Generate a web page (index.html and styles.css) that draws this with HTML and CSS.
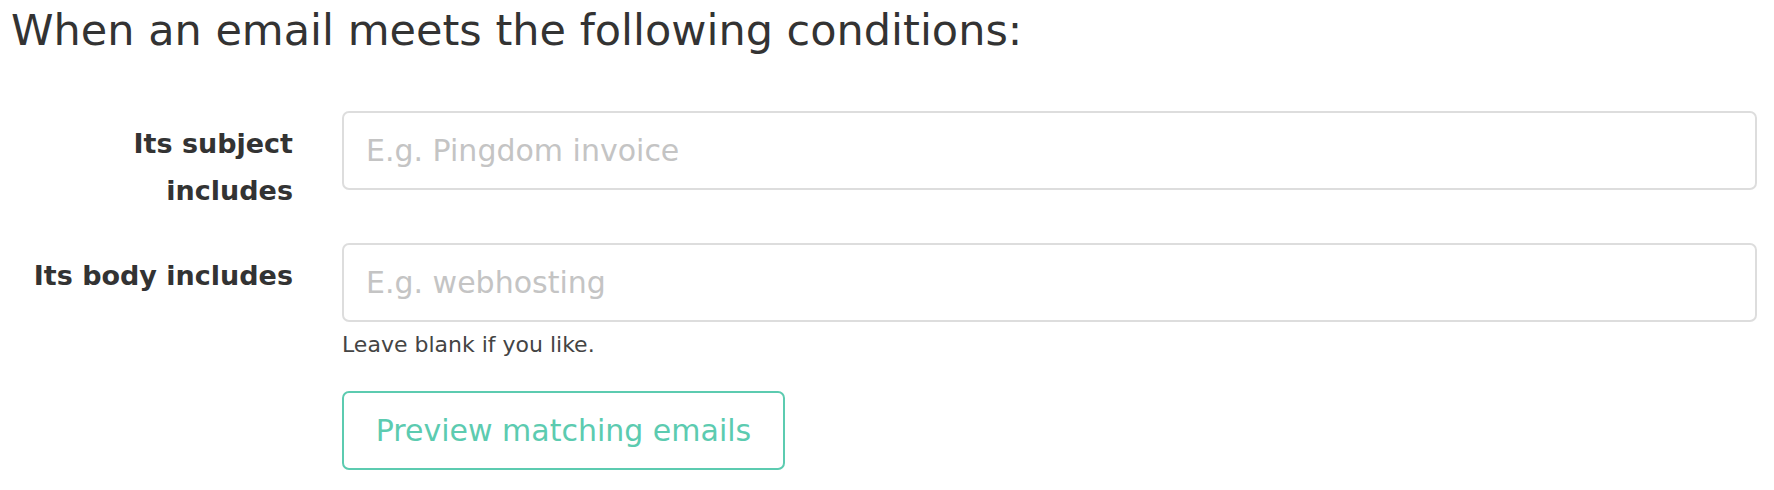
FILE: index.html
```html
<!DOCTYPE html>
<html lang="en">
<head>
    <meta charset="UTF-8">
    <title>Email conditions</title>
    <link rel="stylesheet" href="styles.css">
</head>
<body>
    <div class="container">
        <h2 class="title">When an email meets the following conditions:</h2>
        <form class="rule-form">
            <div class="form-row">
                <label for="subject">Its subject includes</label>
                <div class="field">
                    <input type="text" id="subject" placeholder="E.g. Pingdom invoice">
                </div>
            </div>
            <div class="form-row">
                <label for="body">Its body includes</label>
                <div class="field">
                    <input type="text" id="body" placeholder="E.g. webhosting">
                    <p class="help">Leave blank if you like.</p>
                    <button type="button" class="btn-preview">Preview matching emails</button>
                </div>
            </div>
        </form>
    </div>
</body>
</html>
```

FILE: styles.css
```css
body {
    margin: 0;
    font-family: "DejaVu Sans", "Open Sans", sans-serif;
    color: #333;
    background: #fff;
}
.container {
    padding: 0 17px 0 11px;
}
.title {
    font-size: 43px;
    font-weight: normal;
    margin: 0;
    padding-top: 0;
    line-height: 60px;
}
.rule-form {
    margin-top: 51px;
    display: flex;
    flex-direction: column;
    gap: 29px;
}
.form-row {
    display: grid;
    grid-template-columns: 282px 1fr;
    column-gap: 49px;
}
.form-row label {
    text-align: right;
    font-size: 27px;
    font-weight: bold;
    line-height: 47px;
    padding-top: 9px;
}
.field input {
    display: block;
    box-sizing: border-box;
    width: 100%;
    height: 79px;
    padding: 0 22px;
    border: 2px solid #ddd;
    border-radius: 7px;
    font-family: inherit;
    font-size: 30px;
    color: #333;
}
.field input::placeholder {
    color: #c4c4c4;
}
.help {
    margin: 8px 0 0;
    font-size: 22px;
    color: #444;
    line-height: 30px;
}
.btn-preview {
    margin-top: 31px;
    height: 79px;
    width: 443px;
    background: #fff;
    border: 2px solid #5ccbb0;
    border-radius: 7px;
    color: #5ccbb0;
    font-family: inherit;
    font-size: 30px;
}
```
